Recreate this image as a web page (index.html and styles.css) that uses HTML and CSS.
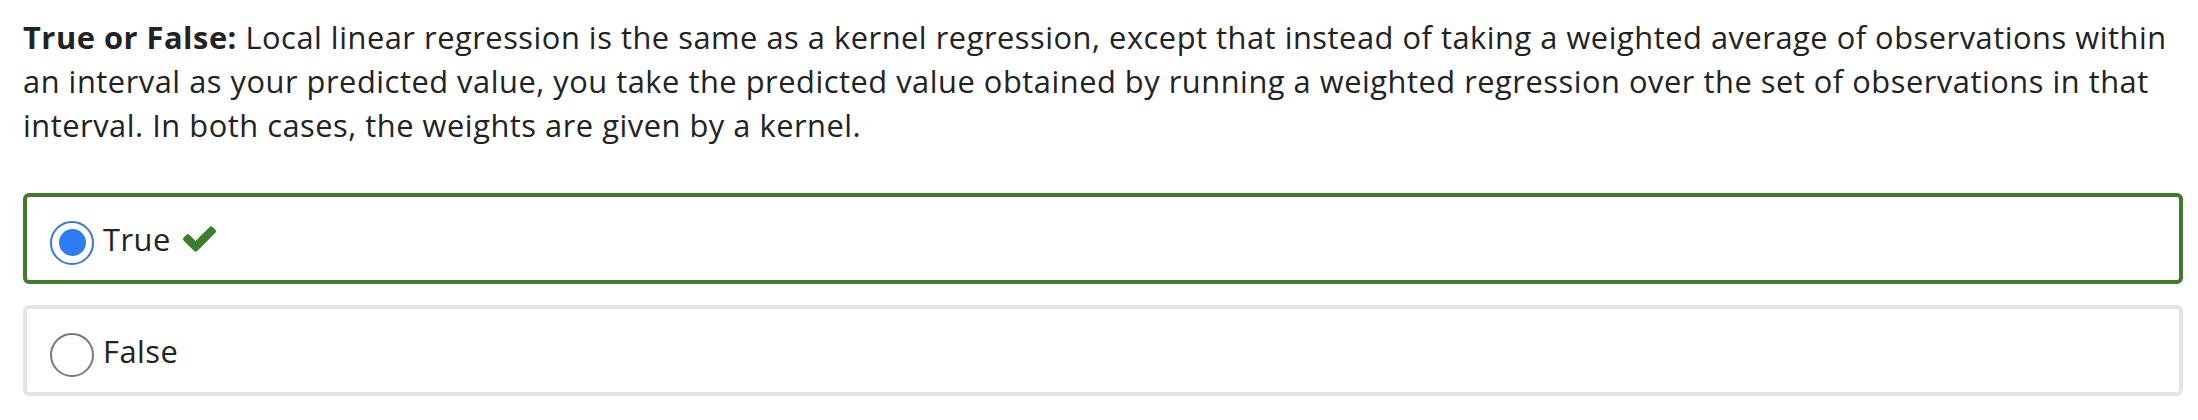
FILE: index.html
```html
<!DOCTYPE html>
<html lang="en">
<head>
<meta charset="utf-8">
<title>Question</title>
<link rel="stylesheet" href="styles.css">
</head>
<body>
<div class="question">
  <p class="prompt"><strong>True or False:</strong> Local linear regression is the same as a kernel regression, except that instead of taking a weighted average of observations within an interval as your predicted value, you take the predicted value obtained by running a weighted regression over the set of observations in that interval. In both cases, the weights are given by a kernel.</p>
  <div class="options">
    <label class="option correct">
      <input class="radio" type="radio" name="tf" checked>
      <span class="label-text">True</span>
      <svg class="check" viewBox="121 334 1550 1188" width="33" height="26" aria-hidden="true"><path d="M1671 566q0 40-28 68l-724 724-136 136q-28 28-68 28t-68-28l-136-136-362-362q-28-28-28-68t28-68l136-136q28-28 68-28t68 28l294 295 656-657q28-28 68-28t68 28l136 136q28 28 28 68z"/></svg>
    </label>
    <label class="option">
      <input class="radio" type="radio" name="tf">
      <span class="label-text">False</span>
    </label>
  </div>
</div>
</body>
</html>
```
FILE: styles.css
```css
html, body {
  margin: 0;
  padding: 0;
  background: #ffffff;
}

.question {
  font-family: "Open Sans", "Liberation Sans", sans-serif;
  font-size: 30.8px;
  line-height: 44px;
  letter-spacing: 0.53px;
  color: #222222;
  padding: 15px 15px 0 23px;
}

.prompt {
  margin: 0;
}

.prompt strong {
  font-weight: 700;
}

.options {
  margin-top: 46px;
  display: flex;
  flex-direction: column;
  gap: 21px;
  width: 2160px;
}

.option {
  box-sizing: border-box;
  height: 91px;
  border: 4px solid #e4e4e4;
  border-radius: 6px;
  display: flex;
  align-items: center;
  padding-left: 23px;
}

.option.correct {
  border-color: #3f7b2f;
}

.radio {
  appearance: none;
  -webkit-appearance: none;
  margin: 8px 9px 0 0;
  box-sizing: border-box;
  width: 44px;
  height: 44px;
  border: 2px solid #767676;
  border-radius: 50%;
  display: flex;
  align-items: center;
  justify-content: center;
  background: #ffffff;
  flex: none;
}

.radio:checked {
  border-color: #3a78d6;
}

.radio:checked::after {
  content: "";
  width: 27px;
  height: 27px;
  border-radius: 50%;
  background: #2f7bf2;
}

.label-text {
  display: block;
}

.check {
  margin-left: 12px;
  fill: #3b7e2c;
  flex: none;
}
```
